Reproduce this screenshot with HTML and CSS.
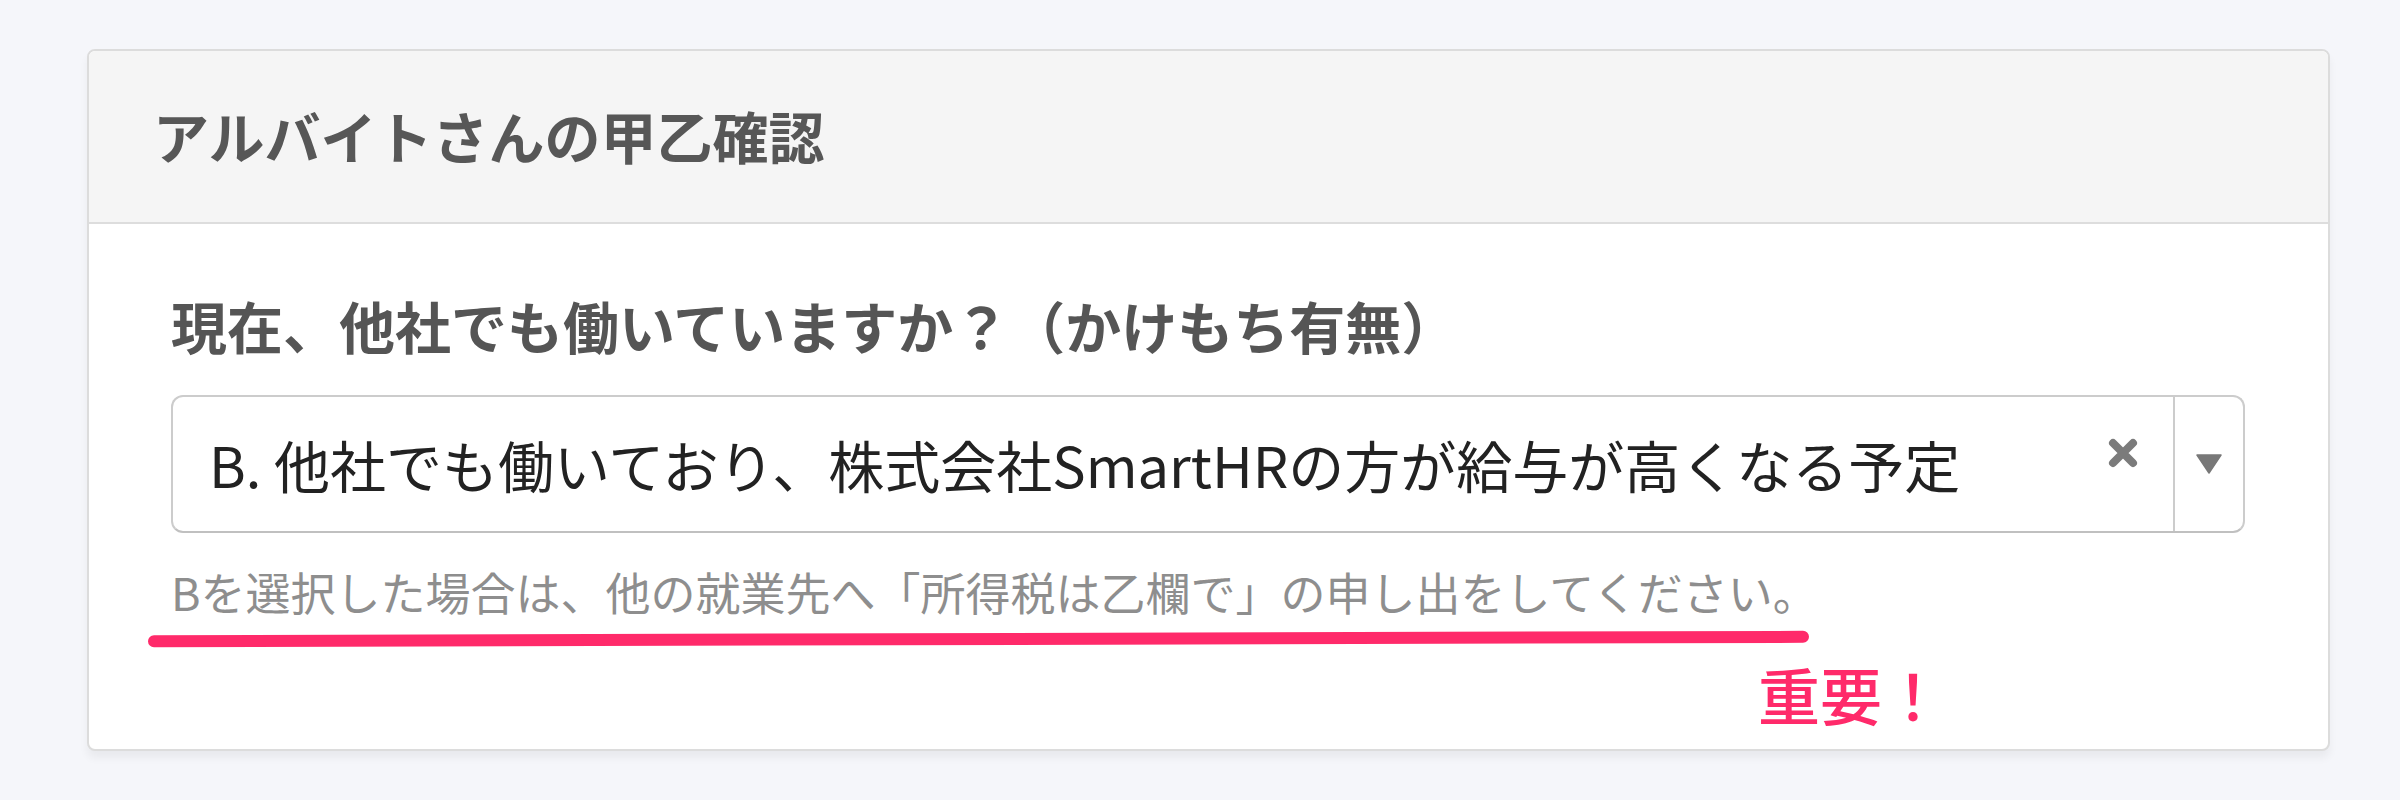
FILE: index.html
```html
<html>
<head>
    <title>アルバイトさんの甲乙確認</title>
    <link rel="stylesheet" href="styles.css">
</head>
<body>
    <div class="card">
        <div class="card-header">
            <h2 class="card-title">アルバイトさんの甲乙確認</h2>
        </div>
        <div class="card-body">
            <label class="field-label">現在、他社でも働いていますか？（かけもち有無）</label>
            <div class="select">
                <div class="select-value">B. 他社でも働いており、株式会社SmartHRの方が給与が高くなる予定</div>
                <div class="select-clear">
                    <svg width="30" height="30" viewBox="0 0 30 30">
                        <path d="M5 5 L25 25 M25 5 L5 25" stroke="#7b7b7b" stroke-width="8" stroke-linecap="round"/>
                    </svg>
                </div>
                <div class="select-arrow">
                    <svg width="26" height="20" viewBox="0 0 26 20">
                        <path d="M1 1 L25 1 L13 19 Z" fill="#787878" stroke="#787878" stroke-width="1.5" stroke-linejoin="round"/>
                    </svg>
                </div>
            </div>
            <p class="help-text">Bを選択した場合は、他の就業先へ「所得税は乙欄で」の申し出をしてください。</p>
            <div class="marker-line"></div>
            <div class="note">重要！</div>
        </div>
    </div>
</body>
</html>
```

FILE: styles.css
```css
body {
    margin: 0;
    padding: 49px 70px 0 87px;
    background-color: #f5f6fa;
    font-family: "Noto Sans CJK JP", "Noto Sans", sans-serif;
}
.card {
    background-color: #fff;
    border: 2px solid #dcdcdc;
    border-radius: 8px;
    box-shadow: 0 7px 8px rgba(0, 0, 0, 0.05);
    overflow: hidden;
}
.card-header {
    background-color: #f5f5f5;
    border-bottom: 2px solid #dddddd;
    padding: 43px 64px 47px;
}
.card-title {
    margin: 0;
    font-size: 56px;
    line-height: 81px;
    font-weight: bold;
    color: #575757;
}
.card-body {
    padding: 61px 83px 15px 82px;
}
.field-label {
    display: block;
    font-size: 56px;
    line-height: 80px;
    font-weight: bold;
    color: #555;
}
.select {
    display: flex;
    align-items: center;
    height: 134px;
    margin-top: 30px;
    border: 2px solid #cccccc;
    border-bottom-color: #c0c0c0;
    border-radius: 12px;
}
.select-value {
    flex: 1;
    padding-left: 36px;
    font-size: 56px;
    line-height: 80px;
    color: #222;
    white-space: nowrap;
}
.select-clear {
    width: 100px;
    display: flex;
    justify-content: center;
    align-items: center;
    margin-top: -22px;
}
.select-arrow {
    width: 68px;
    height: 100%;
    border-left: 2px solid #cccccc;
    display: flex;
    justify-content: center;
    align-items: center;
}
.help-text {
    margin: 26px 0 0;
    font-size: 45px;
    line-height: 66px;
    color: #8e8e8e;
}
.marker-line {
    width: 1661px;
    height: 12px;
    margin: 8px 0 0 -23px;
    border-radius: 6px;
    background-color: #ff2a6a;
    transform: rotate(-0.15deg);
}
.note {
    margin: 9px 0 0 1587px;
    font-size: 62px;
    line-height: 80px;
    font-weight: 500;
    color: #ff2a6a;
}
```
